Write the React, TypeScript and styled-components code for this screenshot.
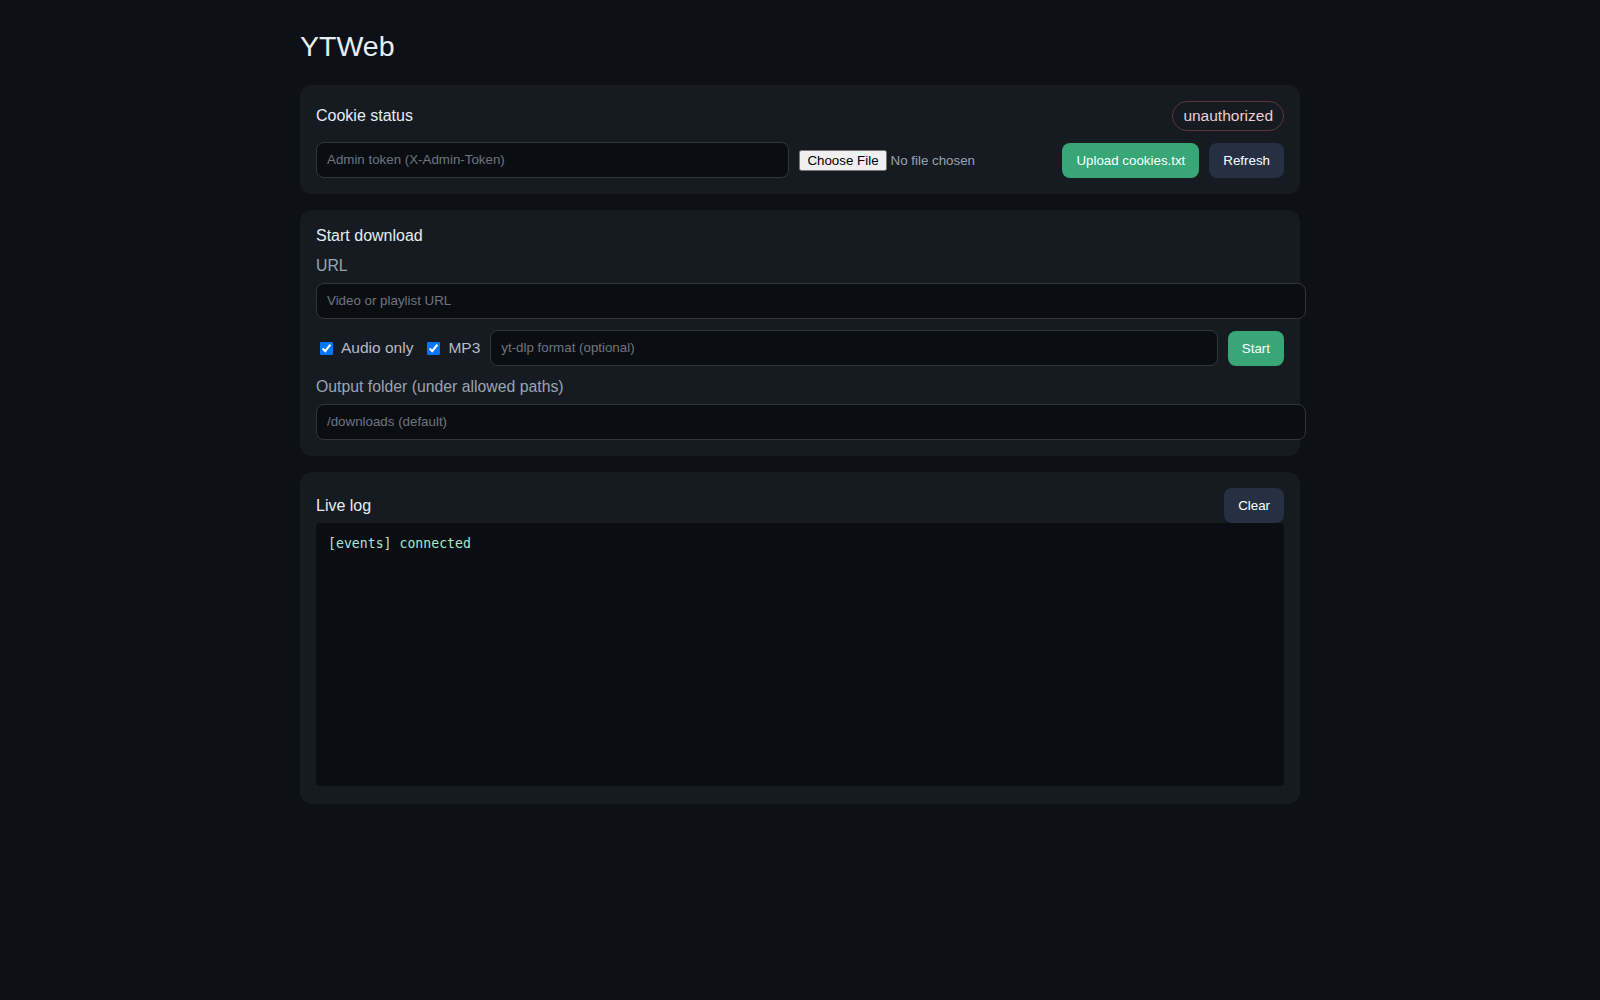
import styled, { createGlobalStyle } from 'styled-components';

const GlobalStyle = createGlobalStyle`
  body {
    margin: 0;
    background: #0d1117;
    color: #e6edf3;
    font-family: "Liberation Sans", Arial, sans-serif;
  }
`;

const App = () => {
    return (
        <>
            <GlobalStyle />
            <Page>
                <Title>YTWeb</Title>

                <Card>
                    <CardHead>
                        <CardTitle>Cookie status</CardTitle>
                        <Badge>unauthorized</Badge>
                    </CardHead>
                    <Row>
                        <TextInput $grow placeholder="Admin token (X-Admin-Token)" />
                        <FileInput type="file" />
                        <Button $primary>Upload cookies.txt</Button>
                        <Button>Refresh</Button>
                    </Row>
                </Card>

                <Card>
                    <CardTitle>Start download</CardTitle>
                    <Label>URL</Label>
                    <TextInput $wide placeholder="Video or playlist URL" />
                    <Row $spaced>
                        <Check>
                            <input type="checkbox" defaultChecked /> Audio only
                        </Check>
                        <Check>
                            <input type="checkbox" defaultChecked /> MP3
                        </Check>
                        <TextInput $grow placeholder="yt-dlp format (optional)" />
                        <Button $primary>Start</Button>
                    </Row>
                    <Label $after>Output folder (under allowed paths)</Label>
                    <TextInput $wide placeholder="/downloads (default)" />
                </Card>

                <Card $last>
                    <CardHead $tight>
                        <CardTitle>Live log</CardTitle>
                        <Button>Clear</Button>
                    </CardHead>
                    <LogBox>[events] connected</LogBox>
                </Card>
            </Page>
        </>
    );
};

export default App;

const Page = styled.div`
    max-width: 1000px;
    margin: 0 auto;
    padding: 29px 0 40px;
`;

const Title = styled.h1`
    margin: 0 0 22px;
    font-size: 28.5px;
    font-weight: 400;
    line-height: 34px;
`;

const Card = styled.section<{ $last?: boolean }>`
    background: #161b22;
    border-radius: 12px;
    padding: 16px 16px ${(p) => (p.$last ? '18px' : '16px')};
    margin-bottom: 16px;
`;

const CardHead = styled.div<{ $tight?: boolean }>`
    display: flex;
    align-items: center;
    justify-content: space-between;
    margin-bottom: ${(p) => (p.$tight ? '0' : '11px')};
`;

const CardTitle = styled.div`
    font-size: 16px;
    line-height: 20px;
`;

const Badge = styled.span`
    border: 1px solid #5e3539;
    border-radius: 999px;
    padding: 4px 10px;
    font-size: 15.5px;
    line-height: 20px;
    color: #f0cdd0;
`;

const Row = styled.div<{ $spaced?: boolean }>`
    display: flex;
    align-items: center;
    gap: 10px;
    margin: ${(p) => (p.$spaced ? '11px 0 0' : '0')};
`;

const TextInput = styled.input<{ $grow?: boolean; $wide?: boolean }>`
    background: #0a0d12;
    border: 1px solid #30363d;
    border-radius: 8px;
    color: #e6edf3;
    padding: 9px 10px;
    font-family: "Liberation Sans", Arial, sans-serif;
    font-size: 13.333px;
    line-height: 16px;
    outline: none;
    ${(p) => (p.$grow ? 'flex: 1; min-width: 0;' : '')}
    ${(p) => (p.$wide ? 'display: block; width: 100%;' : '')}

    &::placeholder {
        color: #6e7681;
    }
`;

const FileInput = styled.input`
    width: 253px;
    color: #9aa4b0;
    font-family: "Liberation Sans", Arial, sans-serif;
    font-size: 13.333px;
`;

const Button = styled.button<{ $primary?: boolean }>`
    border: 0;
    border-radius: 8px;
    padding: 10px 14px;
    background: ${(p) => (p.$primary ? '#38a676' : '#263042')};
    color: #ffffff;
    font-family: "Liberation Sans", Arial, sans-serif;
    font-size: 13.333px;
    line-height: 15px;
    cursor: pointer;
`;

const Label = styled.label<{ $after?: boolean }>`
    display: block;
    color: #9aa4b0;
    font-size: 15.8px;
    line-height: 20px;
    margin: ${(p) => (p.$after ? '11px' : '10px')} 0 7px;
`;

const Check = styled.label`
    display: flex;
    align-items: center;
    gap: 5px;
    color: #b4bcc6;
    font-size: 15.5px;
`;

const LogBox = styled.pre`
    margin: 0;
    height: 263px;
    box-sizing: border-box;
    padding: 11px 12px;
    background: #0a0d12;
    border-radius: 4px;
    color: #a9e6cb;
    font-family: "DejaVu Sans Mono", monospace;
    font-size: 13.2px;
    line-height: 20px;
`;
